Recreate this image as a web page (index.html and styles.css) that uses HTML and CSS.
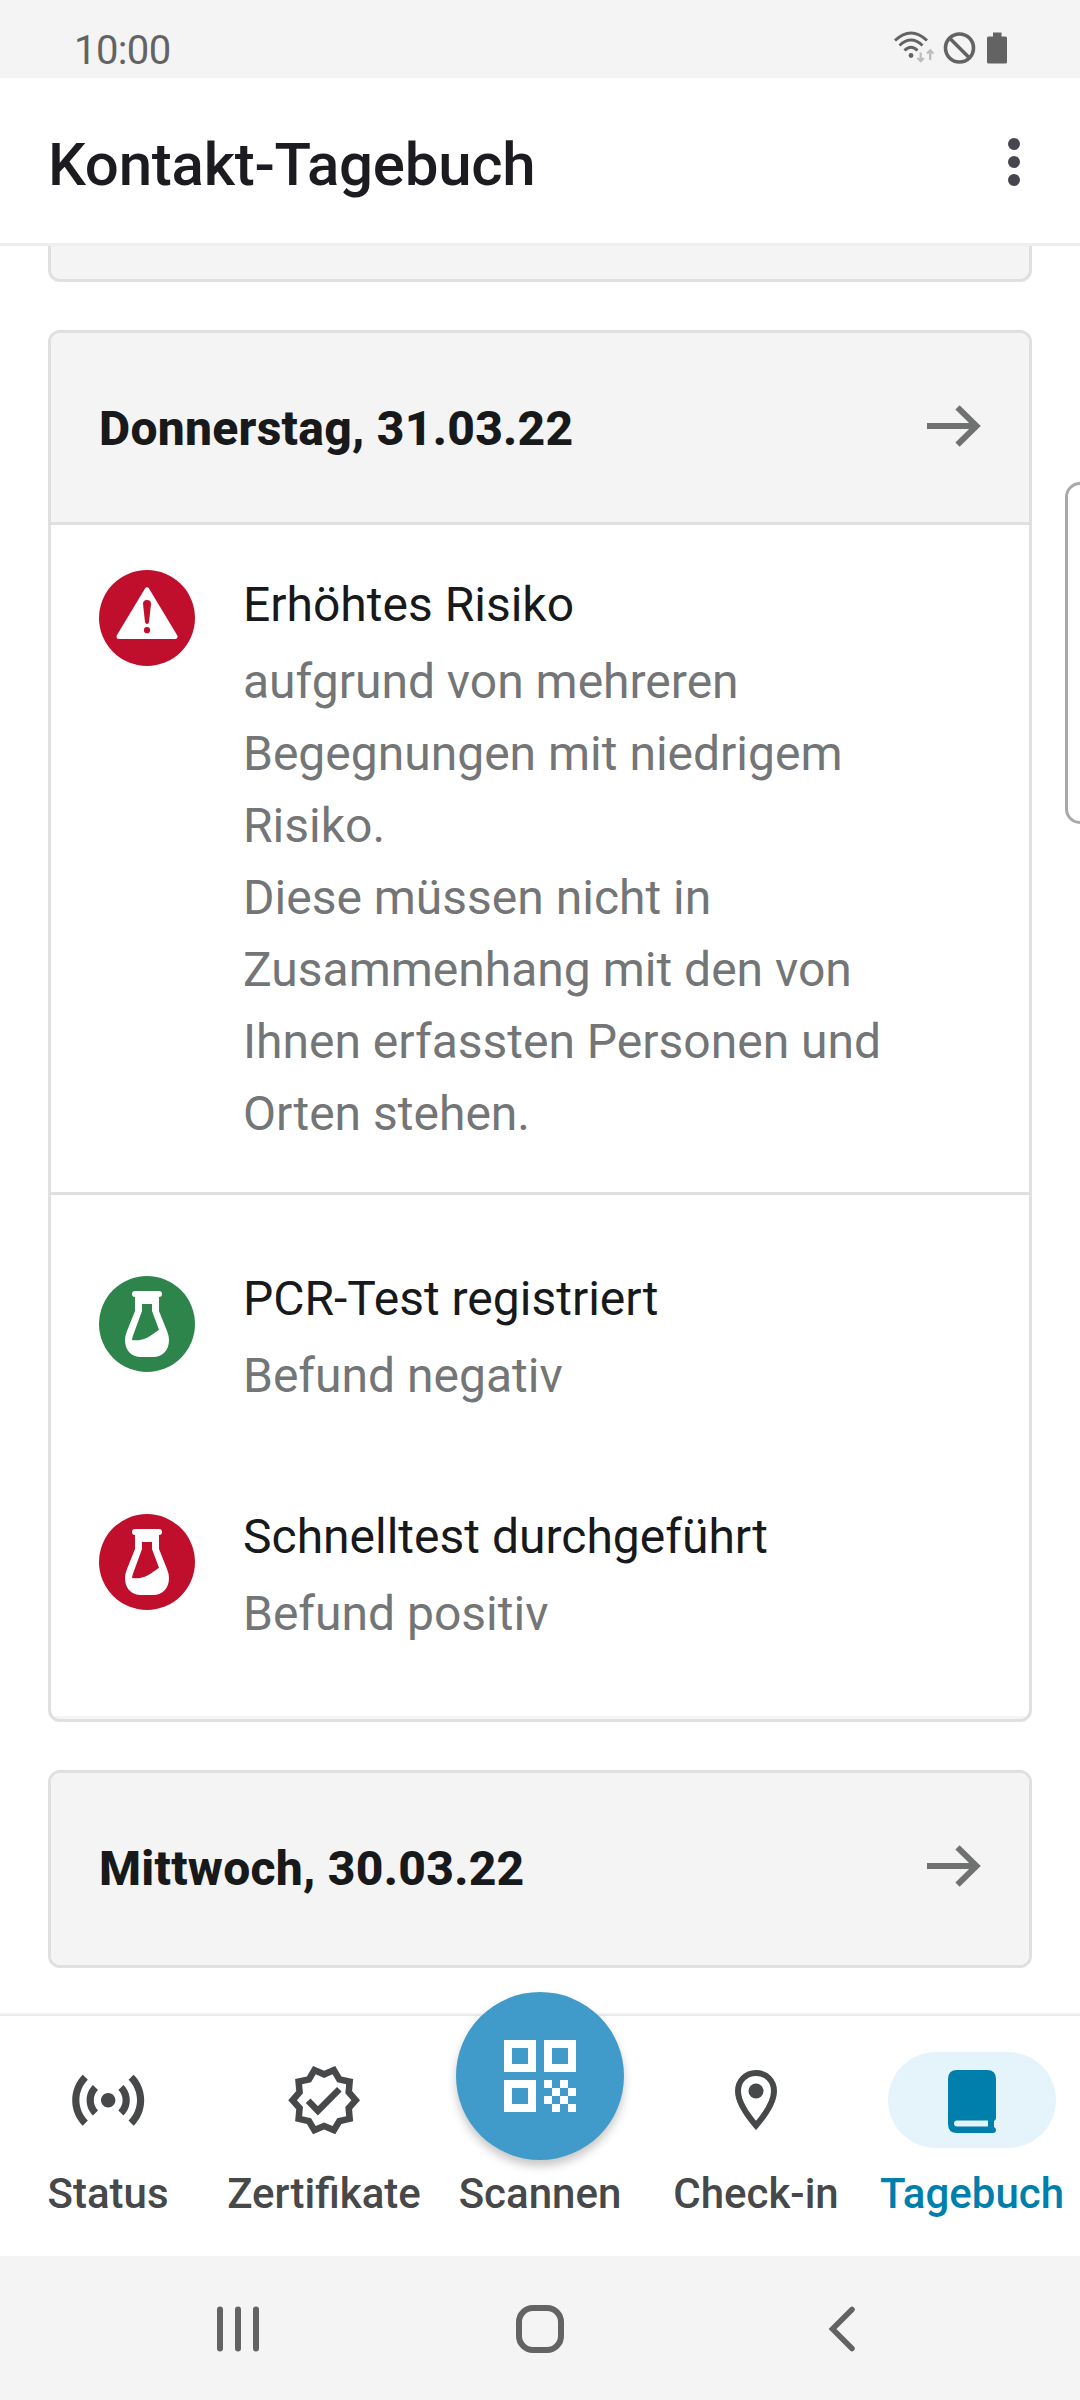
FILE: index.html
```html
<!DOCTYPE html>
<html lang="de">
<head>
<meta charset="utf-8">
<title>Kontakt-Tagebuch</title>
<link rel="stylesheet" href="styles.css">
</head>
<body>
<div class="screen">
  <div class="statusbar">
    <span class="clock">10:00</span>
    <svg class="status-icons" width="116" height="34" viewBox="0 0 116 34">
      <g fill="none" stroke="#636363" stroke-width="3">
        <path d="M2 9.500Q18 -5.500 34 9.500"/>
        <path d="M6.500 14.500Q18 3.500 29.500 14.500"/>
        <path d="M11.500 19.500Q18 13 24.500 19.500"/>
        <circle cx="66.500" cy="17" r="14" stroke-width="3.600"/>
        <path d="M57 7.500L76 26.500" stroke-width="3.600"/>
      </g>
      <circle cx="18" cy="24.500" r="2.400" fill="#636363"/>
      <path d="M27.700 21.500v9M24.500 27l3.200 3.200 3.200-3.200M37.200 29V20M34 22.500l3.200-3.200 3.200 3.200" fill="none" stroke="#bdbdbd" stroke-width="2.300"/>
      <path d="M100 1.500h8.500v4h4q1.500 0 1.500 1.500v24q0 1.500-1.500 1.500h-17q-1.500 0-1.500-1.500v-24q0-1.500 1.500-1.500h4.500z" fill="#636363"/>
    </svg>
  </div>

  <header class="appbar">
    <h1 class="title">Kontakt-Tagebuch</h1>
    <svg width="12" height="48" viewBox="0 0 12 48" fill="#49454f"><circle cx="6" cy="6" r="6"/><circle cx="6" cy="24" r="6"/><circle cx="6" cy="42" r="6"/></svg>
  </header>

  <main class="diary">
    <section class="day day-clipped"></section>

    <section class="day">
      <div class="day-head">
        <h2 class="date">Donnerstag, 31.03.22</h2>
        <svg width="54" height="42" viewBox="0 0 54 42" fill="none" stroke="#6f7270" stroke-width="6"><path d="M0 21H50M30.500 2.300L49.500 21L30.500 39.700"/></svg>
      </div>
      <div class="entry entry-risk">
        <svg class="badge" viewBox="0 0 96 96">
          <circle cx="48" cy="48" r="48" fill="#c00f2d"/>
          <path d="M48 20L76 66.500H20Z" fill="#fff" stroke="#fff" stroke-width="5" stroke-linejoin="round"/>
          <path d="M44 34q0-4 4-4t4 4l-2 18q-.3 2-2 2t-2-2z" fill="#c00f2d"/>
          <circle cx="48" cy="60.200" r="3.100" fill="#c00f2d"/>
        </svg>
        <div class="entry-text">
          <h3 class="entry-title">Erhöhtes Risiko</h3>
          <p class="entry-body">aufgrund von mehreren<br>Begegnungen mit niedrigem<br>Risiko.<br>Diese müssen nicht in<br>Zusammenhang mit den von<br>Ihnen erfassten Personen und<br>Orten stehen.</p>
        </div>
      </div>
      <div class="entry entry-test">
        <svg class="badge" viewBox="0 0 96 96">
          <circle cx="48" cy="48" r="48" fill="#2e854b"/>
          <path d="M36 15h24q3 0 3 3t-3 3V35l8 20q2 5 2 9c0 10-6 17-16 17H42c-10 0-16-7-16-17q0-4 2-9l8-20V21q-3 0-3-3t3-3z" fill="#fff"/>
          <path d="M43 28h10v7l7 18.700C50 61 44 65.500 33 64q.2-2.500 1.600-6L43 35z" fill="#2e854b"/>
        </svg>
        <div class="entry-text">
          <h3 class="entry-title">PCR-Test registriert</h3>
          <p class="entry-body">Befund negativ</p>
        </div>
      </div>
      <div class="entry entry-test entry-last">
        <svg class="badge" viewBox="0 0 96 96">
          <circle cx="48" cy="48" r="48" fill="#c00f2d"/>
          <path d="M36 15h24q3 0 3 3t-3 3V35l8 20q2 5 2 9c0 10-6 17-16 17H42c-10 0-16-7-16-17q0-4 2-9l8-20V21q-3 0-3-3t3-3z" fill="#fff"/>
          <path d="M43 28h10v7l7 18.700C50 61 44 65.500 33 64q.2-2.500 1.600-6L43 35z" fill="#c00f2d"/>
        </svg>
        <div class="entry-text">
          <h3 class="entry-title">Schnelltest durchgeführt</h3>
          <p class="entry-body">Befund positiv</p>
        </div>
      </div>
    </section>

    <section class="day day-closed">
      <div class="day-head">
        <h2 class="date">Mittwoch, 30.03.22</h2>
        <svg width="54" height="42" viewBox="0 0 54 42" fill="none" stroke="#6f7270" stroke-width="6"><path d="M0 21H50M30.500 2.300L49.500 21L30.500 39.700"/></svg>
      </div>
    </section>
  </main>

  <nav class="tabs">
    <div class="tab">
      <span class="tab-icon"><svg width="86.400" height="86.400" viewBox="0 0 24 24" fill="#464849"><path d="M7.760 16.240C6.670 15.160 6 13.660 6 12s.67-3.160 1.760-4.240l1.420 1.420C8.450 9.900 8 10.900 8 12c0 1.100.45 2.100 1.170 2.830l-1.410 1.410zm8.480 0C17.330 15.160 18 13.660 18 12s-.67-3.160-1.760-4.240l-1.420 1.420C15.550 9.900 16 10.900 16 12c0 1.100-.45 2.100-1.170 2.830l1.410 1.410zM12 10c-1.100 0-2 .9-2 2s.9 2 2 2 2-.9 2-2-.9-2-2-2zm8 2c0 2.210-.9 4.210-2.350 5.650l1.420 1.420C20.880 17.260 22 14.760 22 12s-1.120-5.260-2.930-7.070l-1.420 1.420C19.100 7.790 20 9.790 20 12zM6.350 6.350L4.930 4.930C3.120 6.740 2 9.240 2 12s1.120 5.260 2.930 7.070l1.420-1.420C4.900 16.210 4 14.210 4 12s.9-4.210 2.350-5.650z"/></svg></span>
      <span class="label">Status</span>
    </div>
    <div class="tab">
      <span class="tab-icon"><svg width="78.300" height="78.300" viewBox="0 0 24 24" fill="#464849"><path d="M23 12l-2.440-2.780.34-3.680-3.610-.82-1.890-3.180L12 3 8.600 1.540 6.710 4.720l-3.610.81.340 3.680L1 12l2.440 2.780-.34 3.690 3.610.82 1.890 3.180L12 21l3.400 1.460 1.890-3.180 3.610-.82-.34-3.680L23 12zm-4.510 2.110l.26 2.790-2.740.62-1.430 2.410L12 18.820l-2.580 1.110-1.430-2.410-2.740-.62.260-2.800L3.660 12l1.850-2.120-.26-2.780 2.740-.61 1.430-2.410L12 5.180l2.580-1.110 1.430 2.410 2.740.62-.26 2.790L20.340 12l-1.850 2.110z"/><path d="M7.100 12.200L10.080 15.250L16.650 8.650" fill="none" stroke="#464849" stroke-width="2"/></svg></span>
      <span class="label">Zertifikate</span>
    </div>
    <div class="tab">
      <span class="tab-icon"></span>
      <span class="label">Scannen</span>
      <span class="fab"><svg width="72" height="72" viewBox="0 0 72 72"><path fill="#fff" fill-rule="evenodd" d="M0 0h32v32H0zM8 8v16h16V8zM40 0h32v32H40zM48 8v16h16V8zM0 40h32v32H0zM8 48v16h16V48zM40 40h8v8h-8zM56 40h8v8h-8zM48 48h8v8h-8zM64 48h8v8h-8zM40 56h8v8h-8zM56 56h8v8h-8zM48 64h8v8h-8zM64 64h8v8h-8z"/></svg></span>
    </div>
    <div class="tab">
      <span class="tab-icon"><svg width="42" height="60" viewBox="0 0 42 60"><path d="M21 3C10.500 3 3 11 3 21c0 10.500 9 24 18 34.500C30 45 39 31.500 39 21 39 11 31.500 3 21 3z" fill="none" stroke="#464849" stroke-width="6"/><circle cx="21" cy="21" r="7.500" fill="#464849"/></svg></span>
      <span class="label">Check-in</span>
    </div>
    <div class="tab tab-active">
      <span class="tab-icon"><svg class="book" width="48" height="63" viewBox="0 0 48 63"><path fill="#007fad" fill-rule="evenodd" d="M9 0h30q9 0 9 9v39q0 2-2 3v6q2 1 2 3 0 3-3 3H9q-9 0-9-9V9Q0 0 9 0zM9 50.500q-3 0-3 3t3 3h31v-6z"/></svg></span>
      <span class="label">Tagebuch</span>
    </div>
  </nav>

  <div class="sysnav">
    <svg width="42" height="46" viewBox="0 0 42 46" stroke="#636363" stroke-width="6" stroke-linecap="round"><path d="M3 3.500V42.500M21 3.500V42.500M39 3.500V42.500"/></svg>
    <svg width="48" height="48" viewBox="0 0 48 48" fill="none" stroke="#636363" stroke-width="6"><rect x="3" y="3" width="42" height="42" rx="14"/></svg>
    <svg width="42" height="46" viewBox="0 0 42 46" fill="none" stroke="#636363" stroke-width="5.500" stroke-linecap="round"><path d="M31 3.500L11.500 23L31 42.500"/></svg>
  </div>
  <div class="edge-panel"></div>
</div>
</body>
</html>
```
FILE: styles.css
```css
* { box-sizing: border-box; }
body, h1, h2, h3, p { margin: 0; }
body { font-family: Roboto, "Liberation Sans", sans-serif; color: #17191a; background: #fff; }
svg { display: block; flex: none; }

.screen {
  position: relative;
  width: 1080px;
  height: 2400px;
  overflow: hidden;
  display: flex;
  flex-direction: column;
}

.statusbar {
  height: 78px;
  flex: none;
  padding: 0 71px 0 74px;
  background: #f4f4f4;
  display: flex;
  justify-content: space-between;
}
.clock { font-size: 40px; line-height: 47px; letter-spacing: -.6px; padding-top: 27px; color: #636363; }
.status-icons { margin-top: 31px; }

.appbar {
  height: 168px;
  flex: none;
  padding: 3px 60px 0 48px;
  border-bottom: 3px solid #eee;
  display: flex;
  align-items: center;
  justify-content: space-between;
}
.title { font-size: 60px; font-weight: 500; line-height: 72px; letter-spacing: -.25px; color: #1c1b1f; padding-top: 6px; }

.diary {
  height: 1767px;
  flex: none;
  padding: 0 48px;
  overflow: hidden;
  display: flex;
  flex-direction: column;
  gap: 48px;
}
.day { flex: none; border: 3px solid #e0e0e0; border-radius: 12px; overflow: hidden; }
.day-clipped { height: 36px; border-top: 0; border-radius: 0 0 12px 12px; background: #f4f4f4; }
.day-head {
  height: 192px;
  padding: 0 48px 3px;
  background: #f4f4f4;
  border-bottom: 3px solid #e0e0e0;
  display: flex;
  align-items: center;
  justify-content: space-between;
}
.day-closed .day-head { border-bottom: 0; padding-bottom: 6px; }
.date { font-size: 48px; font-weight: 800; line-height: 56px; letter-spacing: .27px; padding-top: 6px; }

.entry { display: flex; gap: 48px; padding: 0 48px; }
.entry-risk { height: 670px; padding-top: 45px; border-bottom: 3px solid #e0e0e0; }
.entry-test { height: 238px; padding-top: 81px; }
.entry-last { height: 286px; border-bottom: 3px solid #f4f4f4; }
.badge { width: 96px; height: 96px; }
.entry-title { font-size: 48px; font-weight: 400; line-height: 56px; margin-top: 7px; }
.entry-body { font-size: 48px; line-height: 72px; color: #737576; margin-top: 13px; }
.entry-test .entry-title { margin-top: -5px; }

.tabs {
  height: 243px;
  flex: none;
  padding-top: 39px;
  background: linear-gradient(#f7f7f7, #e6e6e6) 0 0 / 100% 3px no-repeat #fff;
  display: grid;
  grid-template-columns: repeat(5, 216px);
}
.tab { position: relative; display: flex; flex-direction: column; align-items: center; color: #464849; }
.tab-icon { flex: none; width: 168px; height: 96px; display: flex; align-items: center; justify-content: center; }
.label { font-size: 42px; font-weight: 500; line-height: 48px; margin-top: 22px; white-space: nowrap; }
.tab-active { color: #007fad; }
.tab-active .tab-icon { background: #e5f3fb; border-radius: 48px; }
.book { margin-top: 3px; }
.fab {
  position: absolute;
  left: 24px;
  top: -60px;
  width: 168px;
  height: 168px;
  border-radius: 50%;
  background: #419bca;
  box-shadow: 0 6px 10px rgba(0, 0, 0, .22);
  display: flex;
  align-items: center;
  justify-content: center;
}

.sysnav {
  height: 144px;
  flex: none;
  padding: 2px 217px 0;
  background: #f4f4f4;
  display: flex;
  align-items: center;
  justify-content: space-between;
}

.edge-panel {
  position: absolute;
  left: 1065px;
  top: 482px;
  width: 40px;
  height: 342px;
  border: 3px solid #a9a9a9;
  border-radius: 15px;
}
```
